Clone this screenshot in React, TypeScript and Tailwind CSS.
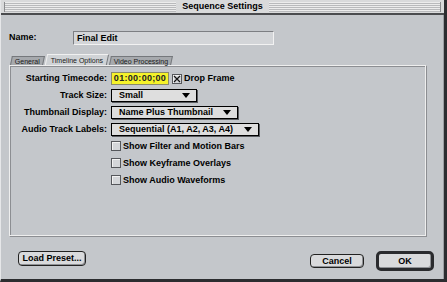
import { useState } from 'react'

const font = "font-['Liberation_Sans',Arial,sans-serif]"

function Popup({ label, width }: { label: string; width: string }) {
  return (
    <div
      className={`${width} h-[13px] flex items-center justify-between pl-[7px] pr-[6px] bg-[#dedede] border border-black shadow-[1px_1px_0_#5a5c60] text-[9px] font-bold text-black`}
    >
      <span className="leading-none">{label}</span>
      <svg width="8" height="5" viewBox="0 0 8 5">
        <path d="M0 0h8L4 5z" fill="#000" />
      </svg>
    </div>
  )
}

function Check({ checked, label }: { checked?: boolean; label: string }) {
  return (
    <div className="flex items-center gap-[2px] h-[12px]">
      <div className="w-[10px] h-[10px] border border-[#55575b] bg-[#d4d6d9] shadow-[inset_1px_1px_0_#f2f2f2] flex items-center justify-center">
        {checked && (
          <svg width="8" height="8" viewBox="0 0 8 8">
            <path d="M1 1L7 7M7 1L1 7" stroke="#111" strokeWidth="1.2" />
          </svg>
        )}
      </div>
      <span className="text-[9px] font-bold leading-none text-black">{label}</span>
    </div>
  )
}

export default function App() {
  const [name] = useState('Final Edit')

  return (
    <div className={`${font} w-[447px] h-[282px] bg-[#c4c7cb] flex flex-col border-l border-l-[#e6e7e9] border-r-[3px] border-r-[#2c2d30] border-b-[3px] border-b-[#2c2d30] overflow-hidden`}>
      {/* title bar */}
      <div className="h-[15px] shrink-0 flex items-center justify-center border-b-2 border-b-[#4a4b4e] bg-[#d9dadb] px-[3px]">
        <div className="flex-1 h-[10px] bg-[repeating-linear-gradient(to_bottom,#ececec_0px,#ececec_1px,#b9babc_1px,#b9babc_2px)] border-l border-l-[#8a8b8d]" />
        <div className="px-[6px] h-[12px] flex items-center">
          <span className="text-[9px] font-bold text-black leading-none">Sequence Settings</span>
        </div>
        <div className="flex-1 h-[10px] bg-[repeating-linear-gradient(to_bottom,#ececec_0px,#ececec_1px,#b9babc_1px,#b9babc_2px)] border-r border-r-[#8a8b8d]" />
      </div>

      <div className="flex-1 flex flex-col border-r border-r-[#9c9ea2]">
        {/* name */}
        <div className="flex items-center mt-[16px] ml-[8px]">
          <span className="w-[64px] text-[9px] font-bold text-black">Name:</span>
          <div className="w-[201px] h-[14px] bg-[#d3d5d8] border border-t-[#7d7f83] border-l-[#7d7f83] border-b-[#f2f2f2] border-r-[#f2f2f2] flex items-center pl-[3px]">
            <span className="text-[9px] font-bold text-black leading-none">{name}</span>
          </div>
        </div>

        {/* tabs */}
        <div className="flex items-end ml-[10px] mt-[9px] h-[11px] text-[7px] text-[#1a1a1a] leading-none">
          <div className="h-[9px] px-[3px] flex items-center bg-[#a6a9ad] border border-b-0 border-[#75787c] skew-x-[-12deg] mr-[2px]">
            <span className="skew-x-[12deg]">General</span>
          </div>
          <div className="h-[11px] px-[4px] flex items-center bg-[#d0d3d6] border-t border-l border-t-[#f0f0f0] border-l-[#f0f0f0] border-r border-r-[#75787c] skew-x-[-12deg] mr-[2px]">
            <span className="skew-x-[12deg]">Timeline Options</span>
          </div>
          <div className="h-[9px] px-[3px] flex items-center bg-[#a6a9ad] border border-b-0 border-[#75787c] skew-x-[-12deg]">
            <span className="skew-x-[12deg]">Video Processing</span>
          </div>
        </div>

        {/* panel */}
        <div className="ml-[8px] w-[418px] h-[172px] border border-t-[#eeeeee] border-l-[#eeeeee] border-b-[#8c8e92] border-r-[#8c8e92] shadow-[inset_-1px_-1px_0_#eeeeee,inset_1px_1px_0_#8c8e92] pt-[6px]">
          <div className="grid grid-cols-[97px_1fr] gap-x-[4px] gap-y-[4px] items-center text-[9px] font-bold text-black">
            <span className="text-right leading-none">Starting Timecode:</span>
            <div className="flex items-center gap-[3px]">
              <div className="w-[58px] h-[13px] bg-[#f5f22a] border border-[#8a8a6a] flex items-center justify-center">
                <span className="text-[9px] font-bold text-[#222] leading-none tracking-[0.3px]">01:00:00;00</span>
              </div>
              <Check checked label="Drop Frame" />
            </div>

            <span className="text-right leading-none">Track Size:</span>
            <Popup label="Small" width="w-[86px]" />

            <span className="text-right leading-none">Thumbnail Display:</span>
            <Popup label="Name Plus Thumbnail" width="w-[127px]" />

            <span className="text-right leading-none">Audio Track Labels:</span>
            <Popup label="Sequential (A1, A2, A3, A4)" width="w-[148px]" />
          </div>

          <div className="flex flex-col gap-[5px] ml-[101px] mt-[4px]">
            <Check label="Show Filter and Motion Bars" />
            <Check label="Show Keyframe Overlays" />
            <Check label="Show Audio Waveforms" />
          </div>
        </div>

        {/* buttons */}
        <div className="flex items-center justify-between mt-[14px] pl-[17px] pr-[9px]">
          <button className="w-[68px] h-[15px] rounded-[4px] border border-[#222] bg-[#d9dadc] shadow-[inset_-1px_-1px_0_#8f9195] text-[9px] font-bold text-black leading-none -mt-[6px]">
            Load Preset...
          </button>
          <div className="flex items-center gap-[12px]">
            <button className="w-[54px] h-[14px] rounded-[4px] border border-[#222] bg-[#d9dadc] shadow-[inset_-1px_-1px_0_#8f9195] text-[9px] font-bold text-black leading-none">
              Cancel
            </button>
            <button className="w-[58px] h-[20px] rounded-[5px] border-[3px] border-[#2a2b2e] bg-[#d9dadc] shadow-[inset_-1px_-1px_0_#8f9195] text-[9px] font-bold text-black leading-none">
              OK
            </button>
          </div>
        </div>
      </div>
    </div>
  )
}
